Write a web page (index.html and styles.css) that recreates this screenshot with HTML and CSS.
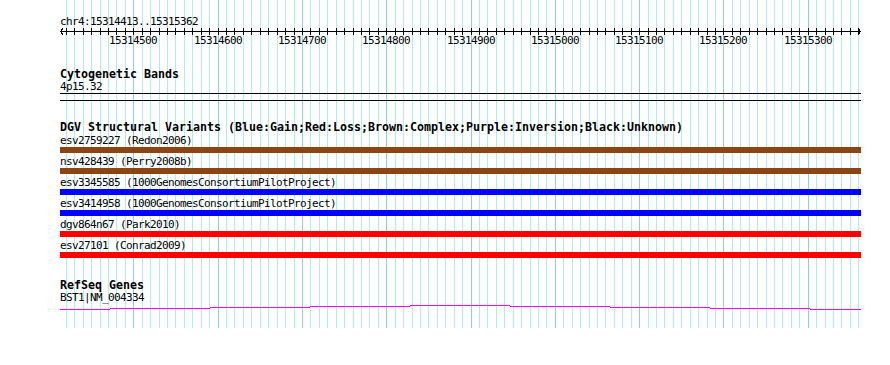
FILE: index.html
```html
<!DOCTYPE html>
<html lang="en">
<head>
  <meta charset="UTF-8" />
  <title>chr4:15314413..15315362</title>
  <link rel="stylesheet" href="styles.css">
</head>
<body>
  <div class="panel">
    <!-- grid lines, one every 10 bp, darker every 100 bp -->
    <svg class="grid" width="890" height="328" viewBox="0 0 890 328" shape-rendering="crispEdges">
      <g class="grid-minor">
        <path id="minor-lines" d="M66.5 0V328M74.5 0V328M83.5 0V328M91.5 0V328M100.5 0V328M108.5 0V328M116.5 0V328M125.5 0V328
          M142.5 0V328M150.5 0V328M159.5 0V328M167.5 0V328M175.5 0V328M184.5 0V328M192.5 0V328M201.5 0V328M209.5 0V328
          M226.5 0V328M234.5 0V328M243.5 0V328M251.5 0V328M260.5 0V328M268.5 0V328M277.5 0V328M285.5 0V328M294.5 0V328
          M310.5 0V328M319.5 0V328M327.5 0V328M336.5 0V328M344.5 0V328M353.5 0V328M361.5 0V328M369.5 0V328M378.5 0V328
          M395.5 0V328M403.5 0V328M412.5 0V328M420.5 0V328M428.5 0V328M437.5 0V328M445.5 0V328M454.5 0V328M462.5 0V328
          M479.5 0V328M487.5 0V328M496.5 0V328M504.5 0V328M513.5 0V328M521.5 0V328M530.5 0V328M538.5 0V328M546.5 0V328
          M563.5 0V328M572.5 0V328M580.5 0V328M589.5 0V328M597.5 0V328M605.5 0V328M614.5 0V328M622.5 0V328M631.5 0V328
          M648.5 0V328M656.5 0V328M664.5 0V328M673.5 0V328M681.5 0V328M690.5 0V328M698.5 0V328M707.5 0V328M715.5 0V328
          M732.5 0V328M740.5 0V328M749.5 0V328M757.5 0V328M766.5 0V328M774.5 0V328M782.5 0V328M791.5 0V328M799.5 0V328
          M816.5 0V328M825.5 0V328M833.5 0V328M841.5 0V328M850.5 0V328M858.5 0V328"/>
      </g>
      <g class="grid-major">
        <path id="major-lines" d="M133.5 0V328M218.5 0V328M302.5 0V328M386.5 0V328M471.5 0V328M555.5 0V328M639.5 0V328M723.5 0V328M808.5 0V328"/>
      </g>
    </svg>

    <div class="ruler">
      <div class="ruler-title">chr4:15314413..15315362</div>
      <svg class="ruler-scale" width="802" height="20" viewBox="60 28 802 20" shape-rendering="crispEdges">
        <clipPath id="tick-band"><rect x="60" y="28" width="802" height="7"/></clipPath>
        <g class="ticks" clip-path="url(#tick-band)">
          <use href="#minor-lines"/>
          <use href="#major-lines"/>
        </g>
        <path class="axis" d="M60 31.5H861M63.5 27.5L60.5 31.5L63.5 35.5M857.5 27.5L860.5 31.5L857.5 35.5"/>
        <text x="109" y="44">15314500</text>
        <text x="194" y="44">15314600</text>
        <text x="278" y="44">15314700</text>
        <text x="362" y="44">15314800</text>
        <text x="447" y="44">15314900</text>
        <text x="531" y="44">15315000</text>
        <text x="615" y="44">15315100</text>
        <text x="699" y="44">15315200</text>
        <text x="784" y="44">15315300</text>
      </svg>
    </div>

    <section class="track cyto">
      <h3 class="track-title">Cytogenetic Bands</h3>
      <div class="feat-label">4p15.32</div>
      <div class="band"></div>
    </section>

    <section class="track dgv">
      <h3 class="track-title">DGV Structural Variants (Blue:Gain;Red:Loss;Brown:Complex;Purple:Inversion;Black:Unknown)</h3>
      <div class="features">
        <div class="feature">
          <div class="feat-label">esv2759227 (Redon2006)</div>
          <div class="bar complex"></div>
        </div>
        <div class="feature">
          <div class="feat-label">nsv428439 (Perry2008b)</div>
          <div class="bar complex"></div>
        </div>
        <div class="feature">
          <div class="feat-label">esv3345585 (1000GenomesConsortiumPilotProject)</div>
          <div class="bar gain"></div>
        </div>
        <div class="feature">
          <div class="feat-label">esv3414958 (1000GenomesConsortiumPilotProject)</div>
          <div class="bar gain"></div>
        </div>
        <div class="feature">
          <div class="feat-label">dgv864n67 (Park2010)</div>
          <div class="bar loss"></div>
        </div>
        <div class="feature">
          <div class="feat-label">esv27101 (Conrad2009)</div>
          <div class="bar loss"></div>
        </div>
      </div>
    </section>

    <section class="track refseq">
      <h3 class="track-title">RefSeq Genes</h3>
      <div class="feat-label">BST1|NM_004334</div>
      <!-- intron connector across the whole view -->
      <svg class="gene" width="801" height="8" viewBox="60 304 801 8" shape-rendering="crispEdges">
        <path d="M60 309.5H110M110 308.5H210M210 307.5H310M310 306.5H410M410 305.5H510M510 306.5H610M610 307.5H710M710 308.5H810M810 309.5H861"/>
      </svg>
    </section>
  </div>
</body>
</html>
```

FILE: styles.css
```css
:root {
  --grid-minor: #afeeee;
  --grid-major: #87cefa;
  --sv-complex: #8b4513;
  --sv-gain: #0000ff;
  --sv-loss: #ff0000;
  --gene: #ff00ff;
}

* {
  box-sizing: border-box;
  margin: 0;
  padding: 0;
}

body {
  background: #fff;
  color: #000;
  font-family: "DejaVu Sans Mono", "Liberation Mono", monospace;
  font-size: 11px;
  letter-spacing: -0.62px;
}

.panel {
  position: relative;
  z-index: 0;
  width: 890px;
  height: 365px;
  padding: 16px 0 0 60px;
  background: #fff;
}

.grid {
  position: absolute;
  top: 0;
  left: 0;
  z-index: -1;
}

.grid-minor {
  fill: none;
  stroke: var(--grid-minor);
  stroke-width: 1;
}

.grid-major {
  fill: none;
  stroke: var(--grid-major);
  stroke-width: 1;
}

/* Ruler */
.ruler-title {
  height: 12px;
  line-height: 12px;
  white-space: nowrap;
}

.ruler-scale {
  display: block;
}

.ruler-scale .ticks {
  fill: none;
  stroke: #000;
}

.ruler-scale .axis {
  fill: none;
  stroke: #000;
  stroke-width: 1;
}

.ruler-scale text {
  font-family: "DejaVu Sans Mono", "Liberation Mono", monospace;
  font-size: 11px;
  letter-spacing: -0.62px;
  fill: #000;
}

/* Tracks */
.track {
  width: 801px;
  margin-top: 20px;
}

.track-title {
  height: 13px;
  line-height: 13px;
  font-size: 11.63px;
  font-weight: bold;
  letter-spacing: 0;
  white-space: nowrap;
}

.feat-label {
  height: 12px;
  line-height: 12px;
  white-space: nowrap;
}

.band {
  height: 8px;
  border-top: 1px solid #000;
  border-bottom: 1px solid #000;
}

.features {
  display: flex;
  flex-direction: column;
  gap: 3px;
  margin-top: 1px;
}

.bar {
  height: 6px;
}

.bar.complex { background: var(--sv-complex); }
.bar.gain { background: var(--sv-gain); }
.bar.loss { background: var(--sv-loss); }

.track.refseq {
  margin-top: 21px;
}

.gene {
  display: block;
}

.gene path {
  fill: none;
  stroke: var(--gene);
  stroke-width: 1;
}
```
